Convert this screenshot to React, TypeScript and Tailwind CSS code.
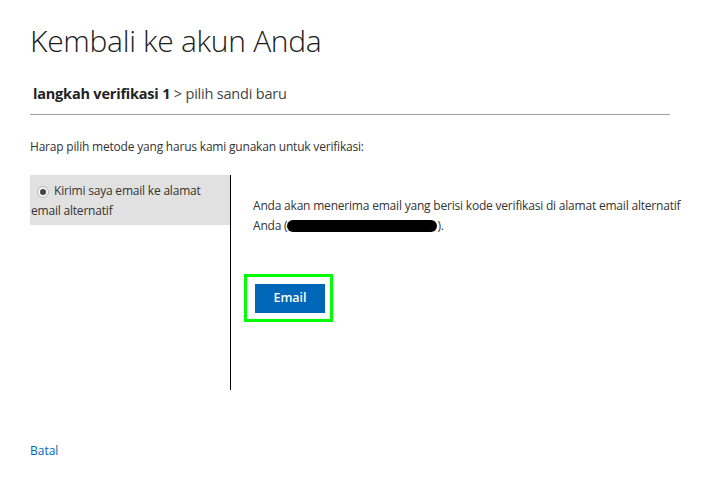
export default function App() {
  return (
    <div className="min-h-screen w-full bg-white font-['Open_Sans',sans-serif] text-[#333]">
      <div className="w-[640px] pl-[30px] pt-[21px] box-content">
        {/* Title */}
        <h1 className="text-[30px] font-light leading-[40px] text-[#1b1b1b] tracking-[-0.3px]">
          Kembali ke akun Anda
        </h1>

        {/* Step header */}
        <div className="mt-[22px] pl-[3px] text-[14.5px] leading-[22px] tracking-[-0.2px] text-[#333]">
          <span className="font-bold text-[#222]">langkah verifikasi 1</span>
          <span className="text-[#444]"> &gt; pilih sandi baru</span>
        </div>
        <div className="mt-[9px] h-px w-[640px] bg-[#a0a0a0]" />

        {/* Prompt */}
        <p className="mt-[23px] text-[12px] leading-[18px] tracking-[-0.2px] text-[#333]">
          Harap pilih metode yang harus kami gunakan untuk verifikasi:
        </p>

        {/* Options + detail */}
        <div className="mt-[19px] flex">
          <div className="w-[200px] shrink-0">
            <label className="block bg-[#e1e1e1] pl-[1px] pr-2 pt-[6px] pb-[4px] text-[12px] leading-[20px] tracking-[-0.2px] text-[#333]">
              <span className="inline-flex h-[12px] w-[12px] items-center justify-center rounded-full border border-[#b9b9b9] bg-[#f7f7f7] ml-[6px] mr-[5px] shadow-[inset_0_0_1px_#ccc]">
                <span className="h-[6px] w-[6px] rounded-full bg-[#444]" />
              </span>
              Kirimi saya email ke alamat email alternatif
            </label>
          </div>
          <div className="h-[215px] w-px shrink-0 bg-black" />
          <div className="flex-1 pl-[22px] pt-[21px]">
            <p className="whitespace-nowrap text-[12px] leading-[20px] tracking-[-0.2px] text-[#333]">
              Anda akan menerima email yang berisi kode verifikasi di alamat email alternatif
              <br />
              Anda (
              <span className="inline-block h-[12px] w-[150px] translate-y-[2px] rounded-full bg-black" />
              ).
            </p>
            <div className="mt-[38px] -ml-[9px] inline-block border-[3px] border-[#00ff00] pl-[8px] pr-[5px] pt-[7px] pb-[6px]">
              <button className="block h-[29px] w-[70px] bg-[#0067b8] text-[12.5px] font-semibold text-white">
                Email
              </button>
            </div>
          </div>
        </div>

        {/* Cancel */}
        <a href="#" className="mt-[53px] block text-[12px] leading-[16px] text-[#0067b8]">
          Batal
        </a>
      </div>
    </div>
  );
}
